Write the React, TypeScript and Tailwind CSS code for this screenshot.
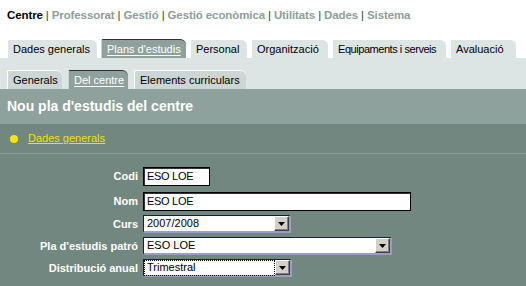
import React from "react";

const navItems = ["Professorat", "Gestió", "Gestió econòmica", "Utilitats", "Dades", "Sistema"];

const tabs1 = [
  { label: "Dades generals", w: "w-[90px]" },
  { label: "Plans d'estudis", w: "w-[85px]", active: true },
  { label: "Personal", w: "w-[57px]" },
  { label: "Organització", w: "w-[77px]" },
  { label: "Equipaments i serveis", w: "w-[114px]", tight: true },
  { label: "Avaluació", w: "w-[66px]" },
];

const tabs2 = [
  { label: "Generals", w: "w-[55px]" },
  { label: "Del centre", w: "w-[60px]", active: true },
  { label: "Elements curriculars", w: "w-[112px]" },
];

function Tab({ label, w, active, row2, tight }: { label: string; w: string; active?: boolean; row2?: boolean; tight?: boolean }) {
  if (active) {
    return (
      <div
        className={`${w} h-[19px] rounded-tl-[2px] rounded-tr-[6px] bg-[#8fa19c] border-t border-t-[#2b2f2e] border-l border-l-[#c8d2d0] flex items-center pl-[5px] text-white text-[11px]`}
      >
        <span className="underline underline-offset-[2px] decoration-white">{label}</span>
      </div>
    );
  }
  return (
    <div
      className={`${w} h-[19px] rounded-tl-[2px] rounded-tr-[6px] ${row2 ? "bg-[#ccd6d4]" : "bg-[#dde5e4]"} border-t border-t-white border-l border-l-white flex items-center pl-[5px] text-black text-[11px] whitespace-nowrap ${tight ? "tracking-[-0.45px]" : ""}`}
    >
      {label}
    </div>
  );
}

function Arrow() {
  return (
    <div className="w-[15px] h-full bg-[#d4d0c8] border-t border-l border-t-white border-l-white border-r border-b border-r-[#404040] border-b-[#404040] shadow-[inset_-1px_-1px_0_#808080] flex items-center justify-center">
      <svg width="7" height="4" viewBox="0 0 7 4">
        <polygon points="0,0 7,0 3.5,4" fill="#000" />
      </svg>
    </div>
  );
}

function Select({ value, w, focus }: { value: string; w: string; focus?: boolean }) {
  return (
    <div className={`${w} h-[18px] flex bg-white border-t border-l border-t-[#1c1c3c] border-l-[#1c1c3c] border-r-2 border-b-2 border-r-[#9c9cc4] border-b-[#9c9cc4]`}>
      <div className="flex-1 flex items-center pl-[1px] pr-[1px]">
        <div className={`flex-1 h-[14px] flex items-center pl-[2px] text-[11px] text-black leading-none ${focus ? "outline outline-1 outline-dotted outline-black" : ""}`}>
          {value}
        </div>
      </div>
      <Arrow />
    </div>
  );
}

function Input({ value, w }: { value: string; w: string }) {
  return (
    <div className={`${w} h-[19px] bg-white border border-black shadow-[inset_1px_1px_0_#333] flex items-center pl-[3px] text-[11px] text-black tracking-[-0.3px]`}>
      {value}
    </div>
  );
}

function Label({ children }: { children: React.ReactNode }) {
  return <div className="w-[138px] text-right text-white font-bold text-[11px] pr-0">{children}</div>;
}

export default function App() {
  return (
    <div className="w-[526px] h-[286px] overflow-hidden bg-white font-['Liberation_Sans',Arial,sans-serif]">
      {/* top nav */}
      <div className="h-[39px] pt-[7px] pl-[7px] text-[11.5px] font-bold flex items-start tracking-[-0.1px]">
        <span className="text-black">Centre</span>
        {navItems.map((n) => (
          <React.Fragment key={n}>
            <span className="text-[#3a3a3a] px-[3px] font-normal">|</span>
            <span className="text-[#8d9e9a]">{n}</span>
          </React.Fragment>
        ))}
      </div>
      {/* tabs row 1 */}
      <div className="flex gap-[4px] pl-[7px] h-[19px]">
        {tabs1.map((t) => (
          <Tab key={t.label} {...t} />
        ))}
      </div>
      {/* strip with tabs row 2 */}
      <div className="bg-[#dde5e4] pt-[12px] h-[31px]">
        <div className="flex gap-[6px] pl-[7px] h-[19px]">
          {tabs2.map((t) => (
            <Tab key={t.label} {...t} row2 />
          ))}
        </div>
      </div>
      {/* header */}
      <div className="h-[35px] bg-[#8fa19c] flex items-center pl-[7px] text-white font-bold text-[14px]">
        Nou pla d'estudis del centre
      </div>
      {/* body */}
      <div className="bg-[#72877f] h-[162px]">
        <div className="h-[30px] flex items-center pl-[10px] gap-[10px] border-b border-b-[#8c9e99]">
          <div className="w-[8px] h-[8px] rounded-full bg-[#f7e600]" />
          <span className="text-[11px] text-[#ece400] underline">Dades generals</span>
        </div>
        <div className="pt-[13px] flex flex-col">
          <div className="flex items-center gap-[5px]">
            <Label>Codi</Label>
            <Input value="ESO LOE" w="w-[67px]" />
          </div>
          <div className="flex items-center gap-[5px] mt-[6px]">
            <Label>Nom</Label>
            <Input value="ESO LOE" w="w-[268px]" />
          </div>
          <div className="flex items-center gap-[5px] mt-[4px]">
            <Label>Curs</Label>
            <Select value="2007/2008" w="w-[148px]" />
          </div>
          <div className="flex items-center gap-[5px] mt-[4px]">
            <Label>Pla d'estudis patró</Label>
            <Select value="ESO LOE" w="w-[249px]" />
          </div>
          <div className="flex items-center gap-[5px] mt-[4px]">
            <Label>Distribució anual</Label>
            <Select value="Trimestral" w="w-[149px]" focus />
          </div>
        </div>
      </div>
    </div>
  );
}
